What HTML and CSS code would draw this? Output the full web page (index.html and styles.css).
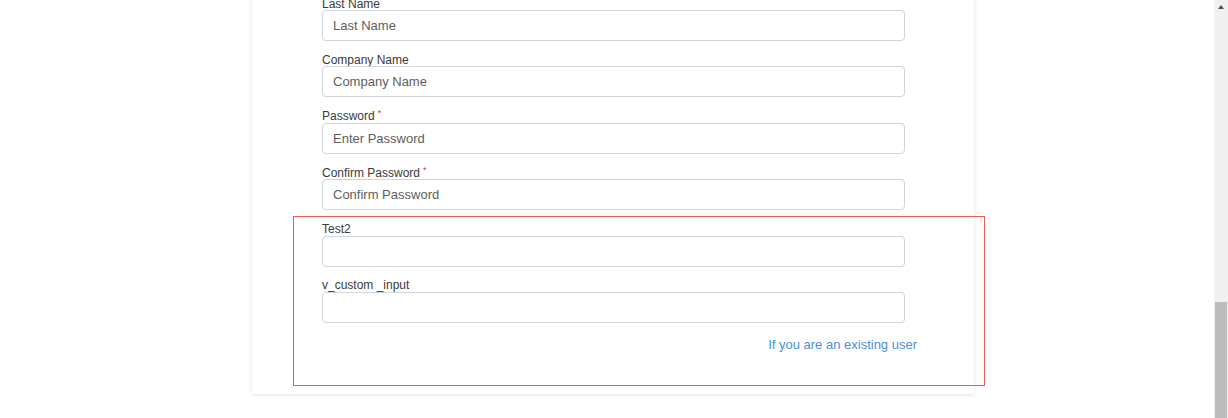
FILE: index.html
```html
<!DOCTYPE html>
<html lang="en">
<head>
<meta charset="utf-8">
<title>Register</title>
<link rel="stylesheet" href="styles.css">
</head>
<body>
<div class="page">
  <div class="card">
    <form class="form">
      <div class="group">
        <label class="label">Last Name</label>
        <input class="input" type="text" placeholder="Last Name">
      </div>
      <div class="group">
        <label class="label">Company Name</label>
        <input class="input" type="text" placeholder="Company Name">
      </div>
      <div class="group">
        <label class="label">Password<span class="req">*</span></label>
        <input class="input" type="password" placeholder="Enter Password">
      </div>
      <div class="group">
        <label class="label">Confirm Password<span class="req">*</span></label>
        <input class="input" type="password" placeholder="Confirm Password">
      </div>
      <div class="group">
        <label class="label">Test2</label>
        <input class="input" type="text">
      </div>
      <div class="group">
        <label class="label">v_custom _input</label>
        <input class="input" type="text">
      </div>
      <div class="link-row">
        <a class="link" href="#">If you are an existing user</a>
      </div>
    </form>
  </div>
</div>
<div class="scrollbar">
  <div class="scroll-arrow"></div>
  <div class="scroll-thumb"></div>
</div>
<div class="highlight"></div>
</body>
</html>
```

FILE: styles.css
```css
html, body {
  margin: 0;
  padding: 0;
  height: 418px;
  overflow: hidden;
  background: #ffffff;
}

body {
  display: flex;
  font-family: "Liberation Sans", Arial, sans-serif;
  color: #333333;
  position: relative;
}

.page {
  flex: 1;
  height: 418px;
  overflow: hidden;
}

.card {
  margin-left: 252px;
  margin-top: -24.5px;
  width: 722px;
  background: #ffffff;
  box-shadow: 0 1px 4px rgba(0, 0, 0, 0.13);
  padding: 20px 69px 41px 70px;
  box-sizing: border-box;
}

.form {
  display: flex;
  flex-direction: column;
  gap: 10.9px;
}

.group {
  display: flex;
  flex-direction: column;
}

.label {
  font-size: 12px;
  line-height: 16px;
  margin-bottom: -1.5px;
  color: #3a3a3a;
}

.req {
  color: #e03030;
  font-size: 9px;
  vertical-align: top;
  margin-left: 3px;
  line-height: 10px;
}

.input {
  height: 31px;
  box-sizing: border-box;
  border: 1px solid #cfd5dc;
  border-radius: 4px;
  padding: 0 10px;
  font-family: "Liberation Sans", Arial, sans-serif;
  font-size: 13px;
  color: #555555;
  background: #ffffff;
  outline: none;
}

.input::placeholder {
  color: #5e5e5e;
  opacity: 1;
}

.link-row {
  display: flex;
  justify-content: flex-end;
  margin-top: 3.1px;
  margin-right: -12px;
}

.link {
  font-size: 13px;
  line-height: 16px;
  color: #4a8fd8;
  text-decoration: none;
}

.scrollbar {
  width: 14px;
  height: 418px;
  background: #f0f0f0;
  position: relative;
  flex: none;
}

.scroll-arrow {
  position: absolute;
  top: 5px;
  left: 4px;
  width: 0;
  height: 0;
  border-left: 3.5px solid transparent;
  border-right: 3.5px solid transparent;
  border-bottom: 4px solid #505050;
}

.scroll-thumb {
  position: absolute;
  top: 302px;
  left: 1px;
  width: 12px;
  height: 116px;
  background: #bcbcbc;
}

.highlight {
  position: absolute;
  left: 293px;
  top: 216px;
  width: 692px;
  height: 170px;
  box-sizing: border-box;
  border: 1px solid #ef5b5b;
  pointer-events: none;
}
```
